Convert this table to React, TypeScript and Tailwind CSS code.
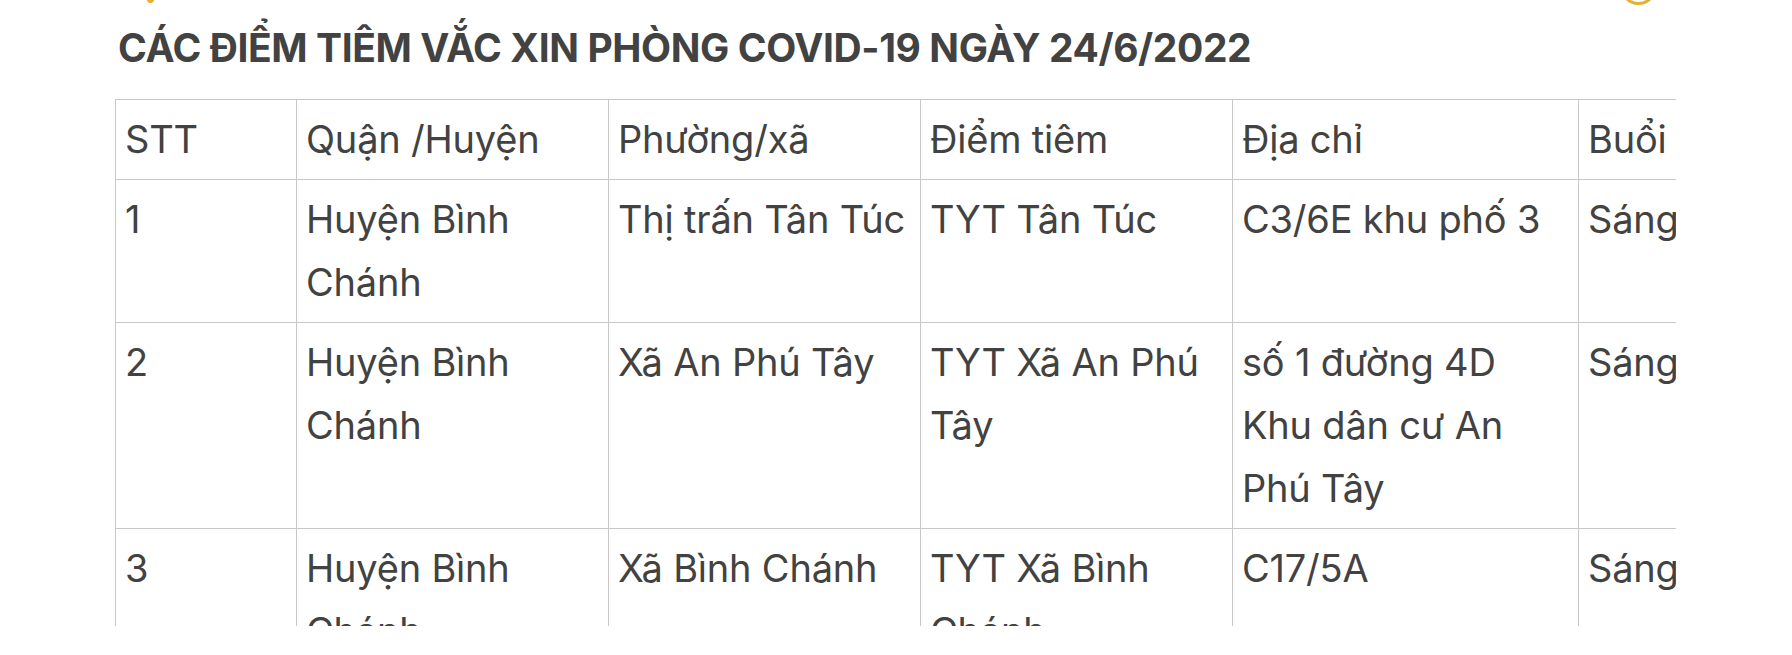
const rows = [
  ["1", "Huyện Bình Chánh", "Thị trấn Tân Túc", "TYT Tân Túc", "C3/6E khu phố 3", "Sáng"],
  ["2", "Huyện Bình Chánh", "Xã An Phú Tây", "TYT Xã An Phú Tây", "số 1 đường 4D Khu dân cư An Phú Tây", "Sáng"],
  ["3", "Huyện Bình Chánh", "Xã Bình Chánh", "TYT Xã Bình Chánh", "C17/5A", "Sáng"],
];

const head = ["STT", "Quận /Huyện", "Phường/xã", "Điểm tiêm", "Địa chỉ", "Buổi"];

export default function App() {
  return (
    <div className="relative h-[655px] w-[1792px] overflow-hidden bg-white font-['Inter','Noto_Sans',sans-serif] text-[#424242]">
      {/* cut-off icons from the section above */}
      <div className="absolute left-[147px] top-[-4px] h-[7px] w-[7px] rounded-full bg-[#e5b02c]" />
      <div className="absolute left-[1620px] top-[-32px] h-[37px] w-[37px] rounded-full border-[3px] border-[#e2b233]" />

      <div className="pl-[115px] pt-[22px]">
        <h2 className="pl-[3px] text-[39px] font-bold leading-[52px] tracking-[-0.4px]">
          CÁC ĐIỂM TIÊM VẮC XIN PHÒNG COVID-19 NGÀY 24/6/2022
        </h2>

        <div className="mt-[25px] h-[527px] w-[1561px] overflow-hidden">
          <table className="w-[1800px] table-fixed border-collapse text-[38px] leading-[63px] tracking-[-0.2px]">
            <colgroup>
              <col className="w-[181px]" />
              <col className="w-[312px]" />
              <col className="w-[312px]" />
              <col className="w-[312px]" />
              <col className="w-[346px]" />
              <col className="w-[337px]" />
            </colgroup>
            <thead>
              <tr>
                {head.map((h) => (
                  <td key={h} className="whitespace-nowrap border border-[#c8c8c8] px-[9px] py-[8px] align-top font-normal">
                    {h}
                  </td>
                ))}
              </tr>
            </thead>
            <tbody>
              {rows.map((r) => (
                <tr key={r[0]}>
                  {r.map((c, i) => (
                    <td key={i} className="border border-[#c8c8c8] px-[9px] py-[8px] align-top">
                      {c}
                    </td>
                  ))}
                </tr>
              ))}
            </tbody>
          </table>
        </div>
      </div>
    </div>
  );
}
